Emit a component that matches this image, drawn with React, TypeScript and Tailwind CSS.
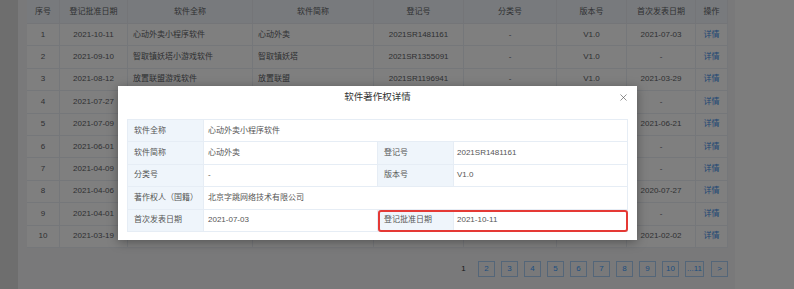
import React from 'react';
import { X } from 'lucide-react';

const font = { fontFamily: '"Liberation Sans", "Noto Sans CJK SC", sans-serif' };

const columns = [
  { title: '序号', align: 'center' },
  { title: '登记批准日期', align: 'center' },
  { title: '软件全称', align: 'left' },
  { title: '软件简称', align: 'left' },
  { title: '登记号', align: 'center' },
  { title: '分类号', align: 'center' },
  { title: '版本号', align: 'center' },
  { title: '首次发表日期', align: 'center' },
  { title: '操作', align: 'center' },
];

// rows 4-10 sit behind the dialog, so their middle cells stay empty
const rows = [
  ['1', '2021-10-11', '心动外卖小程序软件', '心动外卖', '2021SR1481161', '-', 'V1.0', '2021-07-03'],
  ['2', '2021-09-10', '智取镇妖塔小游戏软件', '智取镇妖塔', '2021SR1355091', '-', 'V1.0', '-'],
  ['3', '2021-08-12', '放置联盟游戏软件', '放置联盟', '2021SR1196941', '-', 'V1.0', '2021-03-29'],
  ['4', '2021-07-27', '', '', '', '', '', '-'],
  ['5', '2021-07-09', '', '', '', '', '', '2021-06-21'],
  ['6', '2021-06-01', '', '', '', '', '', '-'],
  ['7', '2021-04-09', '', '', '', '', '', '-'],
  ['8', '2021-04-06', '', '', '', '', '', '2020-07-27'],
  ['9', '2021-04-01', '', '', '', '', '', '-'],
  ['10', '2021-03-19', '', '', '', '', '', '2021-02-02'],
];

const pages = ['2', '3', '4', '5', '6', '7', '8', '9', '10'];

const gridCols = 'grid grid-cols-[33px_68px_125px_121px_90px_93px_70px_69px_32px]';

const App: React.FC = () => {
  return (
    <div className="relative w-[794px] h-[289px] overflow-hidden bg-[#f7f7f7] text-[8px] text-[#606266]" style={font}>
      <div className="flex h-full">
        <div className="w-[18px] bg-[#dcdcdc] flex-shrink-0" />
        <div className="w-[717px] bg-[#f2f3f5] pl-[9px]">
          <div className="w-[701px] bg-white">
            <div className={`${gridCols} h-[24px] bg-[#f1f5fa]`}>
              {columns.map((c) => (
                <div key={c.title} className="flex items-center justify-center border-r border-b border-[#e8ebf0]">
                  {c.title}
                </div>
              ))}
            </div>
            {rows.map((r) => (
              <div key={r[0]} className={`${gridCols} h-[22.4px]`}>
                {r.map((v, i) => (
                  <div
                    key={i}
                    className={`flex items-center border-r border-b border-[#ebeef5] whitespace-nowrap overflow-hidden ${
                      columns[i].align === 'left' ? 'justify-start pl-[5px]' : 'justify-center'
                    }`}
                  >
                    {v}
                  </div>
                ))}
                <div className="flex items-center justify-center border-r border-b border-[#ebeef5] text-[#3f8ee8]">详情</div>
              </div>
            ))}
          </div>

          <div className="w-[701px] mt-[13px] flex justify-end gap-[6px]">
            <div className="w-[17px] h-[16px] flex items-center justify-center text-[#303133]">1</div>
            {pages.map((p) => (
              <div key={p} className="w-[17px] h-[16px] flex items-center justify-center border border-[#a9ccf3] text-[#409eff]">
                {p}
              </div>
            ))}
            <div className="w-[19px] h-[16px] flex items-center justify-center border border-[#a9ccf3] text-[#409eff]">...11</div>
            <div className="w-[17px] h-[16px] flex items-center justify-center border border-[#a9ccf3] text-[#409eff] ml-[1px]">&gt;</div>
          </div>
        </div>
        <div className="flex-1 bg-[#fafafa]" />
      </div>

      <div className="absolute inset-0 bg-black/50" />

      <div className="absolute left-[118px] top-[86px] w-[519px] h-[154px] bg-white shadow-[0_2px_10px_rgba(0,0,0,0.35)] px-[9px]">
        <div className="relative h-[22px] flex items-center justify-center text-[9.5px] text-[#333]">
          软件著作权详情
          <button className="absolute right-[-1px] top-[6px] text-[#555]">
            <X size={11} strokeWidth={1.4} />
          </button>
        </div>
        <div className="mt-[11px] border-t border-l border-[#e6edf5] text-[#555]">
          <div className="flex h-[22.4px]">
            <div className="w-[76px] flex items-center pl-[6px] bg-[#eff5fb] border-r border-b border-[#e6edf5]">软件全称</div>
            <div className="flex-1 flex items-center pl-[4px] border-r border-b border-[#e6edf5]">心动外卖小程序软件</div>
          </div>
          <div className="flex h-[22.4px]">
            <div className="w-[76px] flex items-center pl-[6px] bg-[#eff5fb] border-r border-b border-[#e6edf5]">软件简称</div>
            <div className="w-[174px] flex items-center pl-[4px] border-r border-b border-[#e6edf5]">心动外卖</div>
            <div className="w-[76px] flex items-center pl-[6px] bg-[#eff5fb] border-r border-b border-[#e6edf5]">登记号</div>
            <div className="flex-1 flex items-center pl-[3px] border-r border-b border-[#e6edf5]">2021SR1481161</div>
          </div>
          <div className="flex h-[22.4px]">
            <div className="w-[76px] flex items-center pl-[6px] bg-[#eff5fb] border-r border-b border-[#e6edf5]">分类号</div>
            <div className="w-[174px] flex items-center pl-[4px] border-r border-b border-[#e6edf5]">-</div>
            <div className="w-[76px] flex items-center pl-[6px] bg-[#eff5fb] border-r border-b border-[#e6edf5]">版本号</div>
            <div className="flex-1 flex items-center pl-[3px] border-r border-b border-[#e6edf5]">V1.0</div>
          </div>
          <div className="flex h-[22.4px]">
            <div className="w-[76px] flex items-center pl-[6px] bg-[#eff5fb] border-r border-b border-[#e6edf5]">著作权人（国籍）</div>
            <div className="flex-1 flex items-center pl-[4px] border-r border-b border-[#e6edf5]">北京字跳网络技术有限公司</div>
          </div>
          <div className="flex h-[22.4px]">
            <div className="w-[76px] flex items-center pl-[6px] bg-[#eff5fb] border-r border-b border-[#e6edf5]">首次发表日期</div>
            <div className="w-[174px] flex items-center pl-[4px] border-r border-b border-[#e6edf5]">2021-07-03</div>
            <div className="relative flex-1 flex">
              <div className="w-[76px] flex items-center pl-[6px] bg-[#eff5fb] border-r border-b border-[#e6edf5]">登记批准日期</div>
              <div className="flex-1 flex items-center pl-[3px] border-r border-b border-[#e6edf5]">2021-10-11</div>
              <div className="absolute inset-0 border-2 border-[#e53935] rounded-[3px]" />
            </div>
          </div>
        </div>
      </div>
    </div>
  );
};

export default App;
